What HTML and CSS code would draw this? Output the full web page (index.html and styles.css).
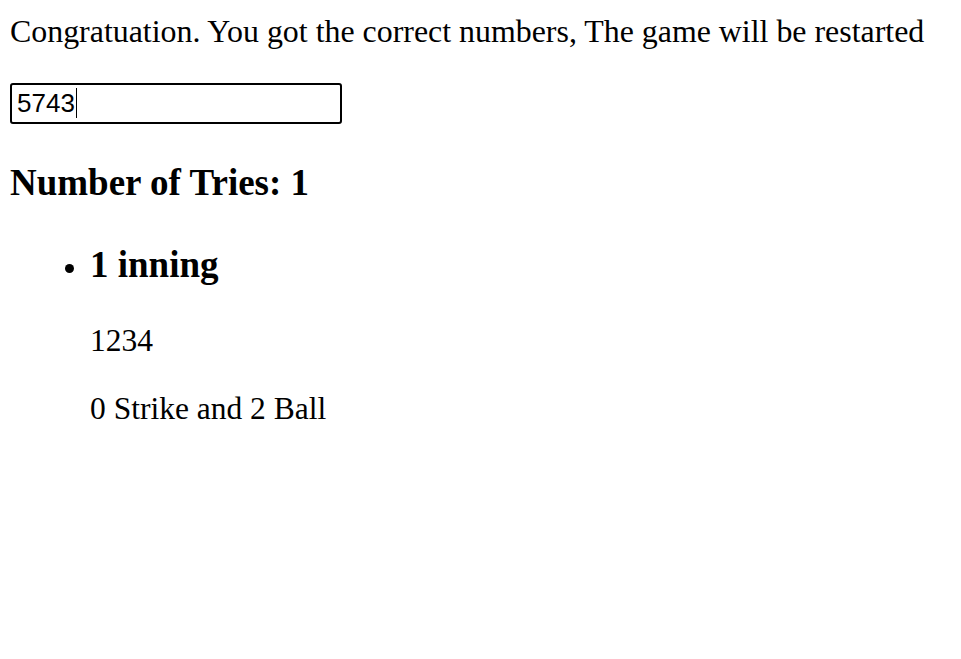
FILE: index.html
```html
<!DOCTYPE html>
<html lang="en">
<head>
<meta charset="utf-8">
<title>Number Baseball</title>
<link rel="stylesheet" href="styles.css">
</head>
<body>
  <div class="message">Congratuation. You got the correct numbers, The game will be restarted</div>
  <div class="field">
    <input class="guess" type="text" value="5743">
    <span class="caret"></span>
  </div>
  <h3 class="tries">Number of Tries: 1</h3>
  <ul class="innings">
    <li class="inning">
      <h3 class="inning-title">1 inning</h3>
      <p class="guess-value">1234</p>
      <p class="result">0 Strike and 2 Ball</p>
    </li>
  </ul>
</body>
</html>
```
FILE: styles.css
```css
html, body {
  background: #ffffff;
}
body {
  margin: 0;
  padding: 14px 10px 0 10px;
  font-family: "Liberation Serif", "Times New Roman", serif;
  font-size: 31.5px;
  color: #000000;
}
.message {
  font-size: 31.9px;
  line-height: 36px;
  white-space: nowrap;
}
.field {
  position: relative;
  width: 332px;
  margin-top: 33px;
}
.guess {
  display: block;
  box-sizing: border-box;
  width: 332px;
  height: 41px;
  margin: 0;
  padding: 0 5px;
  border: 2px solid #000000;
  border-radius: 3px;
  outline: none;
  background: #ffffff;
  font-family: "Liberation Sans", Arial, sans-serif;
  font-size: 26px;
  color: #000000;
}
.caret {
  position: absolute;
  left: 66px;
  top: 5px;
  width: 1px;
  height: 30px;
  background: #000000;
}
.tries {
  margin: 38px 0 0 0;
  font-size: 37px;
  line-height: 42px;
  font-weight: bold;
}
.innings {
  margin: 0;
  padding-left: 80px;
}
.inning-title {
  margin: 40px 0 0 0;
  font-size: 37px;
  line-height: 42px;
  font-weight: bold;
}
.guess-value {
  margin: 36.5px 0 0 0;
  line-height: 36px;
}
.result {
  margin: 32px 0 0 0;
  line-height: 36px;
}
```
